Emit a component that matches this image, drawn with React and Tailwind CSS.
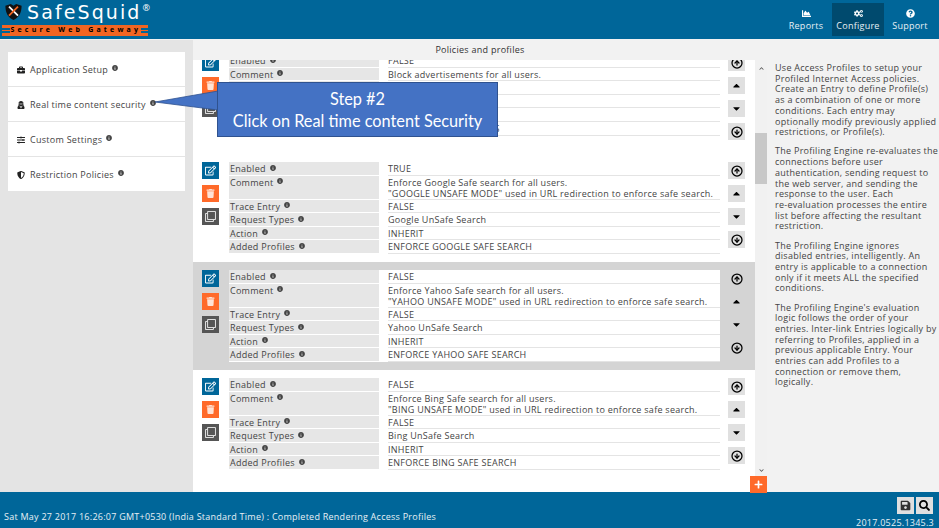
import { CircleArrowDown, CircleArrowUp } from "lucide-react";
import {
  FaBriefcase,
  FaCaretDown,
  FaCaretUp,
  FaChartArea,
  FaChevronDown,
  FaChevronUp,
  FaCogs,
  FaInfoCircle,
  FaPlus,
  FaQuestionCircle,
  FaRegClone,
  FaRegEdit,
  FaSave,
  FaSearch,
  FaShieldAlt,
  FaSlidersH,
  FaTrash,
  FaUserSecret,
} from "react-icons/fa";

const menu = [
  { label: "Application Setup", icon: FaBriefcase },
  { label: "Real time content security", icon: FaUserSecret },
  { label: "Custom Settings", icon: FaSlidersH },
  { label: "Restriction Policies", icon: FaShieldAlt },
];

const entries = [
  {
    enabled: "FALSE",
    comment: ["Block advertisements for all users."],
    request: "Advertisements",
    profiles: "BLOCK ADVERTISEMENTS",
  },
  {
    enabled: "TRUE",
    comment: [
      "Enforce Google Safe search for all users.",
      '"GOOGLE UNSAFE MODE" used in URL redirection to enforce safe search.',
    ],
    request: "Google UnSafe Search",
    profiles: "ENFORCE GOOGLE SAFE SEARCH",
  },
  {
    enabled: "FALSE",
    comment: [
      "Enforce Yahoo Safe search for all users.",
      '"YAHOO UNSAFE MODE" used in URL redirection to enforce safe search.',
    ],
    request: "Yahoo UnSafe Search",
    profiles: "ENFORCE YAHOO SAFE SEARCH",
    selected: true,
  },
  {
    enabled: "FALSE",
    comment: [
      "Enforce Bing Safe search for all users.",
      '"BING UNSAFE MODE" used in URL redirection to enforce safe search.',
    ],
    request: "Bing UnSafe Search",
    profiles: "ENFORCE BING SAFE SEARCH",
  },
];

const help = [
  [
    "Use Access Profiles to setup your",
    "Profiled Internet Access policies.",
    "Create an Entry to define Profile(s)",
    "as a combination of one or more",
    "conditions. Each entry may",
    "optionally modify previously applied",
    "restrictions, or Profile(s).",
  ],
  [
    "The Profiling Engine re-evaluates the",
    "connections before user",
    "authentication, sending request to",
    "the web server, and sending the",
    "response to the user. Each",
    "re-evaluation processes the entire",
    "list before affecting the resultant",
    "restriction.",
  ],
  [
    "The Profiling Engine ignores",
    "disabled entries, intelligently. An",
    "entry is applicable to a connection",
    "only if it meets ALL the specified",
    "conditions.",
  ],
  [
    "The Profiling Engine's evaluation",
    "logic follows the order of your",
    "entries. Inter-link Entries logically by",
    "referring to Profiles, applied in a",
    "previous applicable Entry. Your",
    "entries can add Profiles to a",
    "connection or remove them,",
    "logically.",
  ],
];

function Info() {
  return <FaInfoCircle className="ml-[4px] mb-[4px] inline text-[6px] text-[#444]" />;
}

function Row({ label, children }) {
  return (
    <div className="flex">
      <div className="w-[150px] shrink-0 border-b border-white bg-[#e6e6e6] pl-px pt-px text-[#444]">
        {label}
        <Info />
      </div>
      <div className="ml-[9px] flex-1 border-b border-[#e4e4e4] pt-px text-[#444]">{children}</div>
    </div>
  );
}

function Entry({ entry }) {
  const moveBtn = entry.selected ? "" : "bg-[#e0e0e0]";
  return (
    <div className={`flex h-[108px] shrink-0 pt-2 ${entry.selected ? "bg-[#d4d4d4]" : "bg-white"}`}>
      <div className="ml-[9px] flex w-[17px] shrink-0 flex-col gap-[6px]">
        <button className="flex h-[17px] items-center justify-center bg-[#006699] text-[11px] text-white">
          <FaRegEdit />
        </button>
        <button className="flex h-[17px] items-center justify-center bg-[#ff6a2a] text-[9px] text-[#ffe3d6]">
          <FaTrash />
        </button>
        <button className="flex h-[17px] items-center justify-center bg-[#555] text-[11px] text-[#ddd]">
          <FaRegClone />
        </button>
      </div>
      <div className="ml-[10px] flex h-[92px] w-[491px] shrink-0 flex-col bg-white text-[9px] leading-[11.4px] tracking-[0.27px]">
        <Row label="Enabled">{entry.enabled}</Row>
        <Row label="Comment">
          {entry.comment.map((line) => (
            <div key={line} className="leading-[11px]">
              {line}
            </div>
          ))}
        </Row>
        <Row label="Trace Entry">FALSE</Row>
        <Row label="Request Types">{entry.request}</Row>
        <Row label="Action">INHERIT</Row>
        <Row label="Added Profiles">{entry.profiles}</Row>
      </div>
      <div className="ml-2 flex w-[17px] shrink-0 flex-col gap-[6px] text-black">
        <button className={`flex h-[17px] items-center justify-center ${moveBtn}`}>
          <CircleArrowUp size={12} strokeWidth={2.5} />
        </button>
        <button className={`flex h-[17px] items-center justify-center text-[11px] ${moveBtn}`}>
          <FaCaretUp />
        </button>
        <button className={`flex h-[17px] items-center justify-center text-[11px] ${moveBtn}`}>
          <FaCaretDown />
        </button>
        <button className={`flex h-[17px] items-center justify-center ${moveBtn}`}>
          <CircleArrowDown size={12} strokeWidth={2.5} />
        </button>
      </div>
    </div>
  );
}

function NavItem({ icon: Icon, label, active }) {
  return (
    <div
      className={`flex h-[33px] w-[52px] flex-col items-center justify-center gap-[3px] text-[9px] leading-none tracking-[0.25px] text-[#e8f0f5] ${
        active ? "bg-[#004a6e]" : ""
      }`}
    >
      <Icon className="text-[9px] text-white" />
      {label}
    </div>
  );
}

function Logo() {
  return (
    <div className="ml-[2px] mt-[-1px] w-[146px]">
      <div className="flex h-[23px] items-center pb-[3px] pl-[2px]">
        <svg viewBox="0 0 20 20" className="h-[18px] w-[19px] shrink-0">
          <path d="M1 3 L7 1 L10 3 L13 1 L19 3 C19 11 16 16 10 19 C4 16 1 11 1 3 Z" fill="#111" />
          <path d="M5 4 L15 14" stroke="#fff" strokeWidth="2" />
          <path d="M15 4 L5 14" stroke="#f26522" strokeWidth="2" />
        </svg>
        <span className="ml-[4px] text-[19px] leading-none tracking-[2.1px] text-white [font-family:'DejaVu_Sans',sans-serif]">
          SafeSquid
        </span>
        <span className="mb-[9px] ml-px text-[9px] leading-none text-white">®</span>
      </div>
      <div className="flex h-[11px] items-center justify-between bg-[#f26522] text-[7px] font-bold tracking-[3.2px] text-black">
        <div className="flex h-[7px] w-[10px] flex-col justify-center gap-px">
          <div className="h-[2px] bg-[#006699]" />
          <div className="h-[2px] bg-[#006699]" />
        </div>
        <span className="whitespace-nowrap">Secure Web Gateway</span>
        <div className="flex h-[7px] w-[8px] flex-col justify-center gap-px">
          <div className="h-[2px] bg-[#006699]" />
          <div className="h-[2px] bg-[#006699]" />
        </div>
      </div>
    </div>
  );
}

export default function App() {
  return (
    <div className="relative flex h-[528px] w-[939px] flex-col overflow-hidden bg-white [font-family:'Open_Sans',sans-serif]">
      <header className="flex h-[39px] shrink-0 items-start justify-between bg-[#006699] pt-[3px]">
        <Logo />
        <nav className="mr-[3px] flex">
          <NavItem icon={FaChartArea} label="Reports" />
          <NavItem icon={FaCogs} label="Configure" active />
          <NavItem icon={FaQuestionCircle} label="Support" />
        </nav>
      </header>

      <div className="flex min-h-0 flex-1 bg-[#f2f2f2] pt-px">
        <aside className="flex w-[193px] shrink-0 flex-col gap-px bg-[#e4e4e4] pl-2 pr-2 pt-3">
          {menu.map((item) => (
            <div
              key={item.label}
              className="flex h-[34px] items-center bg-white pl-[9px] pt-[2px] text-[9px] tracking-[0.27px] text-[#444]"
            >
              <item.icon className="mr-[5px] text-[8px] text-[#222]" />
              {item.label}
              <Info />
            </div>
          ))}
        </aside>

        <main className="flex w-[574px] shrink-0 flex-col">
          <div className="flex h-5 shrink-0 items-center justify-center text-[9px] tracking-[0.27px] text-[#333]">
            Policies and profiles
          </div>
          <div className="flex min-h-0 flex-1">
            <div className="min-h-0 w-[562px] shrink-0 overflow-hidden bg-white">
              <div className="mt-[-14px] flex flex-col">
                {entries.map((entry) => (
                  <Entry key={entry.profiles} entry={entry} />
                ))}
              </div>
            </div>
            <div className="flex w-3 shrink-0 flex-col items-center bg-[#f1f1f1] pt-[6px] text-[5px] text-[#555]">
              <FaChevronUp />
              <div className="mt-[62px] h-[51px] w-full bg-[#c8c8c8]" />
              <div className="flex-1" />
              <FaChevronDown className="mb-[19px]" />
            </div>
          </div>
        </main>

        <section className="flex-1 pl-2 pt-[23px] text-[9px] leading-[10.7px] tracking-[0.27px] text-[#444]">
          {help.map((para) => (
            <p key={para[0]} className="mb-[8.5px] whitespace-nowrap">
              {para.map((line) => (
                <span key={line} className="block">
                  {line}
                </span>
              ))}
            </p>
          ))}
        </section>
      </div>

      <footer className="flex h-9 shrink-0 justify-between bg-[#006699] text-[9px] tracking-[0.25px] text-[#e8f0f5]">
        <div className="pl-1 pt-[18px]">
          Sat May 27 2017 16:26:07 GMT+0530 (India Standard Time) : Completed Rendering Access Profiles
        </div>
        <div className="flex flex-col items-end pr-[5px] pt-[5px]">
          <div className="flex gap-[2px] pr-px">
            <button className="flex h-[17px] w-[17px] items-center justify-center bg-[#e0e0e0] text-[11px] text-[#333]">
              <FaSave />
            </button>
            <button className="flex h-[17px] w-[17px] items-center justify-center bg-[#e0e0e0] text-[11px] text-black">
              <FaSearch />
            </button>
          </div>
          <div className="mt-[2px] leading-[13px]">2017.0525.1345.3</div>
        </div>
      </footer>

      <button className="absolute left-[750px] top-[476px] flex h-[17px] w-[17px] items-center justify-center bg-[#ff6a2a] text-[9px] text-white">
        <FaPlus />
      </button>

      {/* step callout */}
      <svg className="absolute left-[154px] top-[80px] h-[40px] w-[66px]" viewBox="0 0 66 40">
        <path d="M1 22 L64 11 L64 30 Z" fill="#4472c4" />
        <path d="M64 11 L1 22 L64 30" fill="none" stroke="#2f528f" strokeWidth="0.8" />
      </svg>
      <div className="absolute left-[217px] top-[82px] flex h-[55px] w-[281px] flex-col items-center justify-center border border-[#2f528f] bg-[#4472c4] text-[16.3px] leading-[22px] text-white [font-family:Lato,sans-serif]">
        <div>Step #2</div>
        <div>Click on Real time content Security</div>
      </div>
    </div>
  );
}
